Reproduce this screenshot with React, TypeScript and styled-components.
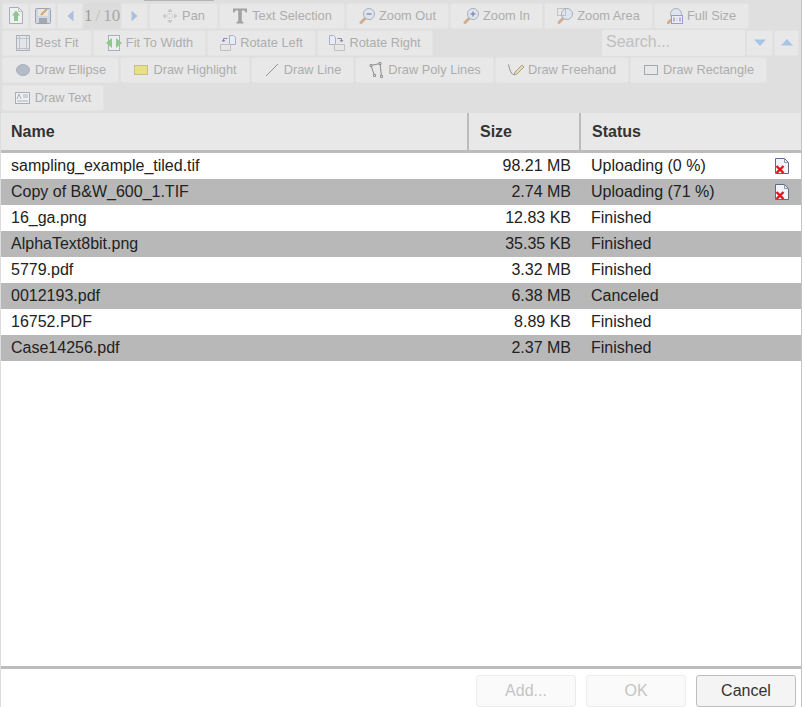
import React from "react";
import styled, { createGlobalStyle } from "styled-components";

const GlobalStyle = createGlobalStyle`
  html, body {
    margin: 0;
    padding: 0;
    background: #ffffff;
    overflow: hidden;
  }
  * { box-sizing: border-box; }
`;

const Dialog = styled.div`
  position: relative;
  display: flex;
  flex-direction: column;
  width: 802px;
  height: 707px;
  border-left: 1px solid #dcdcdc;
  border-right: 1px solid #c4c4c4;
  font-family: "Liberation Sans", Arial, sans-serif;
  overflow: hidden;
`;

const Toolbar = styled.div`
  display: flex;
  flex-direction: column;
  gap: 1px;
  height: 113px;
  padding: 3px 0 0 1px;
  background: #dfdfdf;
`;

const ToolRow = styled.div<{ $top?: number }>`
  display: flex;
  gap: 1px;
  height: 26px;
  margin-top: ${(p) => p.$top ?? 0}px;
`;

const ToolButton = styled.div<{ $w: number }>`
  display: flex;
  align-items: center;
  justify-content: center;
  gap: 4px;
  width: ${(p) => p.$w}px;
  flex: none;
  padding-bottom: 1px;
  background: #e8e8e8;
  border: 1px solid #e3e3e3;
  border-radius: 2px;
  color: #adadad;
  font-size: 12.8px;
  line-height: 15px;
  white-space: nowrap;
`;

const IconSlot = styled.span`
  display: flex;
  align-items: center;
  justify-content: center;
  width: 16px;
  height: 17px;
  flex: none;
`;

const Pager = styled.div`
  display: flex;
  align-items: center;
  justify-content: center;
  width: 36px;
  flex: none;
  padding-bottom: 1px;
  color: #a8a8a8;
  background: #dcdcdc;
  font-family: "Liberation Serif", "Times New Roman", serif;
  font-size: 17px;
  white-space: nowrap;
`;

const PagerCurrent = styled.span`
  color: #9c9c90;
`;

const PagerSlash = styled.span`
  color: #c4bcb0;
  margin: 0 3px;
`;

const Spacer = styled.div<{ $w: number }>`
  width: ${(p) => p.$w}px;
  flex: none;
`;

const SearchBox = styled.div`
  display: flex;
  align-items: center;
  width: 143px;
  flex: none;
  padding: 0 0 2px 4px;
  background: #e9e9e9;
  color: #c0c0c0;
  font-size: 16px;
`;

const TopGrip = styled.div`
  position: absolute;
  top: 0;
  left: 143px;
  width: 70px;
  height: 1px;
  background: #b4b4b4;
`;

const HeaderRow = styled.div`
  display: grid;
  grid-template-columns: 466px 112px 1fr;
  height: 40px;
  background: #e8e8e8;
  border-bottom: 3px solid #bcbcbc;
  color: #333333;
  font-size: 16px;
  font-weight: 700;
`;

const HeaderCell = styled.div<{ $sep?: boolean }>`
  display: flex;
  align-items: center;
  padding-left: ${(p) => (p.$sep ? 11 : 10)}px;
  border-left: ${(p) => (p.$sep ? "2px solid #bcbcbc" : "none")};
`;

const List = styled.div`
  flex: 1;
  background: #ffffff;
`;

const FileRow = styled.div<{ $alt: boolean }>`
  display: grid;
  grid-template-columns: 468px 102px 1fr 26px;
  align-items: center;
  height: 26px;
  background: ${(p) => (p.$alt ? "#b8b8b8" : "#ffffff")};
  color: #222222;
  font-size: 16px;
`;

const NameCell = styled.div`
  padding-left: 10px;
  white-space: nowrap;
`;

const SizeCell = styled.div`
  text-align: right;
  white-space: nowrap;
`;

const StatusCell = styled.div`
  padding-left: 20px;
  white-space: nowrap;
`;

const RemoveCell = styled.div`
  display: flex;
  align-items: center;
`;

const Footer = styled.div`
  display: flex;
  justify-content: flex-end;
  gap: 10px;
  height: 41px;
  padding: 6px 5px 0 0;
  border-top: 3px solid #bcbcbc;
`;

const DialogButton = styled.div<{ $disabled?: boolean }>`
  display: flex;
  align-items: center;
  justify-content: center;
  width: 100px;
  height: 32px;
  border: 1px solid ${(p) => (p.$disabled ? "#ececec" : "#bdbdbd")};
  border-radius: 3px;
  background: ${(p) => (p.$disabled ? "#fafafa" : "#f4f4f4")};
  color: ${(p) => (p.$disabled ? "#c4c4c4" : "#333333")};
  font-size: 16px;
`;

type IconProps = { children: React.ReactNode; w?: number; h?: number };

function Icon({ children, w = 16, h = 16 }: IconProps) {
  return (
    <IconSlot>
      <svg width={w} height={h} viewBox={`0 0 ${w} ${h}`} fill="none">
        {children}
      </svg>
    </IconSlot>
  );
}

const Lens = ({ children }: { children?: React.ReactNode }) => (
  <>
    <path d="M2 14.500l4.500-4.500" stroke="#cfae92" strokeWidth="3" strokeLinecap="round" />
    <circle cx="10" cy="6" r="5.500" fill="#dfe5ee" stroke="#a8b0bc" />
    {children}
  </>
);

const icons: Record<string, React.ReactNode> = {
  upload: (
    <Icon w={14} h={17}>
      <path d="M.5.500h9l4 4v12H.5z" fill="#eef0f2" stroke="#a8aeb6" />
      <path d="M9.500.500v4h4" stroke="#c0c4ca" />
      <path d="M7 3.500l4 5H9v5.500H5V8.500H3z" fill="#8fc68f" />
    </Icon>
  ),
  save: (
    <Icon>
      <rect x="0.500" y="0.500" width="15" height="15" rx="1" fill="#d0d6e2" stroke="#9aa4b8" />
      <rect x="3" y="1" width="10" height="7" fill="#ece6da" />
      <path d="M6 7l6-6" stroke="#d0a878" strokeWidth="2" />
      <rect x="4" y="10" width="8" height="5" fill="#a4a8b0" />
    </Icon>
  ),
  prev: (
    <Icon w={7} h={12}>
      <path d="M6.500.500v11L.5 6z" fill="#a9c0de" />
    </Icon>
  ),
  next: (
    <Icon w={7} h={12}>
      <path d="M.5.500v11l6-5.500z" fill="#a9c0de" />
    </Icon>
  ),
  pan: (
    <Icon>
      <path d="M8 1l2 2.500H6zM8 15l2-2.500H6zM1 8l2.500-2v4zM15 8l-2.500-2v4z" fill="#d0d0d0" stroke="#b4b4b4" strokeWidth=".5" />
      <circle cx="8" cy="8" r="2.500" stroke="#c0c0c0" strokeDasharray="1 1" />
    </Icon>
  ),
  text: (
    <Icon w={14} h={16}>
      <path d="M0 .5h14v4h-1.500L11.500 2.500H8.800V13l1.700 1.500v1H3.500v-1L5.200 13V2.500H2.500L1.500 4.500H0z" fill="#a2a2a2" />
    </Icon>
  ),
  zoomOut: (
    <Icon>
      <Lens>
        <path d="M7.500 6h5" stroke="#8a94b0" strokeWidth="1.500" />
      </Lens>
    </Icon>
  ),
  zoomIn: (
    <Icon>
      <Lens>
        <path d="M7.500 6h5M10 3.500v5" stroke="#8490bc" strokeWidth="1.500" />
      </Lens>
    </Icon>
  ),
  zoomArea: (
    <Icon>
      <Lens>
        <path d="M.5.500h8v7h-8z" stroke="#a0a0a0" strokeDasharray="1 1" />
      </Lens>
    </Icon>
  ),
  fullSize: (
    <Icon>
      <path d="M1 15l3-3" stroke="#cfae92" strokeWidth="3" strokeLinecap="round" />
      <circle cx="9" cy="6" r="5.500" fill="#dfe5ee" stroke="#a8b0bc" />
      <rect x="4.500" y="7.500" width="11" height="8" fill="#ececf6" stroke="#9a9ccc" />
      <path d="M7 9.500v4M10 10.500v.5M10 12.500v.5M13 9.500v4" stroke="#7c7c9c" />
    </Icon>
  ),
  bestFit: (
    <Icon w={14} h={16}>
      <rect x="0.500" y="0.500" width="13" height="15" fill="#e4e6ea" stroke="#a8b0bc" />
      <path d="M3.500.500v15M10.500.500v15M.5 3.500h13M.5 13.500h13" stroke="#bcc2ca" />
    </Icon>
  ),
  fitWidth: (
    <Icon>
      <rect x="2.500" y="0.500" width="11" height="15" fill="#eceef0" stroke="#a8b0bc" />
      <path d="M0 8l6-5v10zM16 8l-6-5v10z" fill="#90c890" />
    </Icon>
  ),
  rotateLeft: (
    <Icon>
      <path d="M9.500.500h4l2 2v7h-6z" fill="#e8ecf6" stroke="#a8b0c8" />
      <path d="M.5 9.500h10v6H.5z" fill="#e6e6e6" stroke="#c0c0c0" />
      <path d="M7.500 3.500H3.500v3M2 5l1.500 2L5 5" stroke="#9088b8" />
    </Icon>
  ),
  rotateRight: (
    <Icon>
      <path d="M.5.500h4l2 2v7h-6z" fill="#e8ecf6" stroke="#a8b0c8" />
      <path d="M5.500 9.500h10v6h-10z" fill="#e6e6e6" stroke="#c0c0c0" />
      <path d="M8.500 3.500h4v3M11 5l1.500 2L14 5" stroke="#9088b8" />
    </Icon>
  ),
  ellipse: (
    <Icon w={14} h={12}>
      <ellipse cx="7" cy="6" rx="6.500" ry="5.500" fill="#b4bcc8" stroke="#a8b0be" />
    </Icon>
  ),
  highlight: (
    <Icon w={14} h={10}>
      <rect x="0.500" y="0.500" width="13" height="9" fill="#e8e088" stroke="#c8c088" />
    </Icon>
  ),
  line: (
    <Icon w={14} h={14}>
      <path d="M1 13L13 1" stroke="#909090" />
    </Icon>
  ),
  poly: (
    <Icon>
      <path d="M3 3.500l9-2 1.500 13M3 3.500l3.500 10" stroke="#8c8c8c" />
      <path d="M2 2.500h2v2H2zM11 .5h2v2h-2zM5.500 12.500h2v2h-2zM12.500 13.500h2v2h-2z" fill="#e8e8e8" stroke="#808080" strokeWidth=".8" />
    </Icon>
  ),
  freehand: (
    <Icon>
      <path d="M.5 2.500c1 5 3 11 6 10" stroke="#8c8c8c" />
      <path d="M6 13l1-3 7-7 2 2-7 7z" fill="#e6d8b0" stroke="#9a947c" strokeWidth=".8" />
    </Icon>
  ),
  rect: (
    <Icon w={14} h={10}>
      <rect x="0.500" y="0.500" width="13" height="9" stroke="#a0a8b4" />
    </Icon>
  ),
  drawText: (
    <Icon w={15} h={12}>
      <rect x="0.500" y="0.500" width="14" height="11" fill="#eef0f2" stroke="#a8aeb8" />
      <path d="M2 7l2-5 2 5M8 3h5M8 5h5M2 9h11" stroke="#9aa0aa" strokeWidth=".8" />
    </Icon>
  ),
  down: (
    <Icon w={12} h={7}>
      <path d="M0 .5h12L6 7z" fill="#a8c4e4" />
    </Icon>
  ),
  up: (
    <Icon w={12} h={7}>
      <path d="M0 6.500h12L6 0z" fill="#a8c4e4" />
    </Icon>
  ),
};

function RemoveIcon() {
  return (
    <svg width="14" height="16" viewBox="0 0 14 16" fill="none">
      <path d="M.5.500h9l4 4v11H.5z" fill="#f2f4f8" stroke="#5c6c88" />
      <path d="M9.500.500v4h4" stroke="#8a96aa" />
      <path d="M1.500 8l7 7M8.500 8l-7 7" stroke="#e0141c" strokeWidth="2.400" />
    </svg>
  );
}

const row1 = [
  { label: "Pan", icon: "pan", w: 69 },
  { label: "Text Selection", icon: "text", w: 126 },
  { label: "Zoom Out", icon: "zoomOut", w: 103 },
  { label: "Zoom In", icon: "zoomIn", w: 93 },
  { label: "Zoom Area", icon: "zoomArea", w: 109 },
  { label: "Full Size", icon: "fullSize", w: 95 },
];

const row2 = [
  { label: "Best Fit", icon: "bestFit", w: 90 },
  { label: "Fit To Width", icon: "fitWidth", w: 113 },
  { label: "Rotate Left", icon: "rotateLeft", w: 109 },
  { label: "Rotate Right", icon: "rotateRight", w: 116 },
];

const row3 = [
  { label: "Draw Ellipse", icon: "ellipse", w: 117 },
  { label: "Draw Highlight", icon: "highlight", w: 130 },
  { label: "Draw Line", icon: "line", w: 103 },
  { label: "Draw Poly Lines", icon: "poly", w: 139 },
  { label: "Draw Freehand", icon: "freehand", w: 134 },
  { label: "Draw Rectangle", icon: "rect", w: 137 },
];

const files = [
  { name: "sampling_example_tiled.tif", size: "98.21 MB", status: "Uploading (0 %)", removable: true },
  { name: "Copy of B&W_600_1.TIF", size: "2.74 MB", status: "Uploading (71 %)", removable: true },
  { name: "16_ga.png", size: "12.83 KB", status: "Finished" },
  { name: "AlphaText8bit.png", size: "35.35 KB", status: "Finished" },
  { name: "5779.pdf", size: "3.32 MB", status: "Finished" },
  { name: "0012193.pdf", size: "6.38 MB", status: "Canceled" },
  { name: "16752.PDF", size: "8.89 KB", status: "Finished" },
  { name: "Case14256.pdf", size: "2.37 MB", status: "Finished" },
];

type Tool = { label: string; icon: string; w: number };

function ToolButtons({ tools }: { tools: Tool[] }) {
  return (
    <>
      {tools.map((t) => (
        <ToolButton key={t.label} $w={t.w}>
          {icons[t.icon]}
          {t.label}
        </ToolButton>
      ))}
    </>
  );
}

export default function App() {
  return (
    <Dialog>
      <GlobalStyle />
      <TopGrip />
      <Toolbar>
        <ToolRow>
          <ToolButton $w={27}>{icons.upload}</ToolButton>
          <ToolButton $w={26}>{icons.save}</ToolButton>
          <ToolButton $w={26}>{icons.prev}</ToolButton>
          <Pager>
            <PagerCurrent>1</PagerCurrent>
            <PagerSlash>/</PagerSlash>
            10
          </Pager>
          <ToolButton $w={27}>{icons.next}</ToolButton>
          <ToolButtons tools={row1} />
        </ToolRow>
        <ToolRow>
          <ToolButtons tools={row2} />
          <Spacer $w={167} />
          <SearchBox>Search...</SearchBox>
          <ToolButton $w={27}>{icons.down}</ToolButton>
          <ToolButton $w={25}>{icons.up}</ToolButton>
        </ToolRow>
        <ToolRow>
          <ToolButtons tools={row3} />
        </ToolRow>
        <ToolRow $top={1}>
          <ToolButton $w={102}>
            {icons.drawText}
            Draw Text
          </ToolButton>
        </ToolRow>
      </Toolbar>
      <HeaderRow>
        <HeaderCell>Name</HeaderCell>
        <HeaderCell $sep>Size</HeaderCell>
        <HeaderCell $sep>Status</HeaderCell>
      </HeaderRow>
      <List>
        {files.map((f, i) => (
          <FileRow key={f.name} $alt={i % 2 === 1}>
            <NameCell>{f.name}</NameCell>
            <SizeCell>{f.size}</SizeCell>
            <StatusCell>{f.status}</StatusCell>
            <RemoveCell>{f.removable && <RemoveIcon />}</RemoveCell>
          </FileRow>
        ))}
      </List>
      <Footer>
        <DialogButton $disabled>Add...</DialogButton>
        <DialogButton $disabled>OK</DialogButton>
        <DialogButton>Cancel</DialogButton>
      </Footer>
    </Dialog>
  );
}
